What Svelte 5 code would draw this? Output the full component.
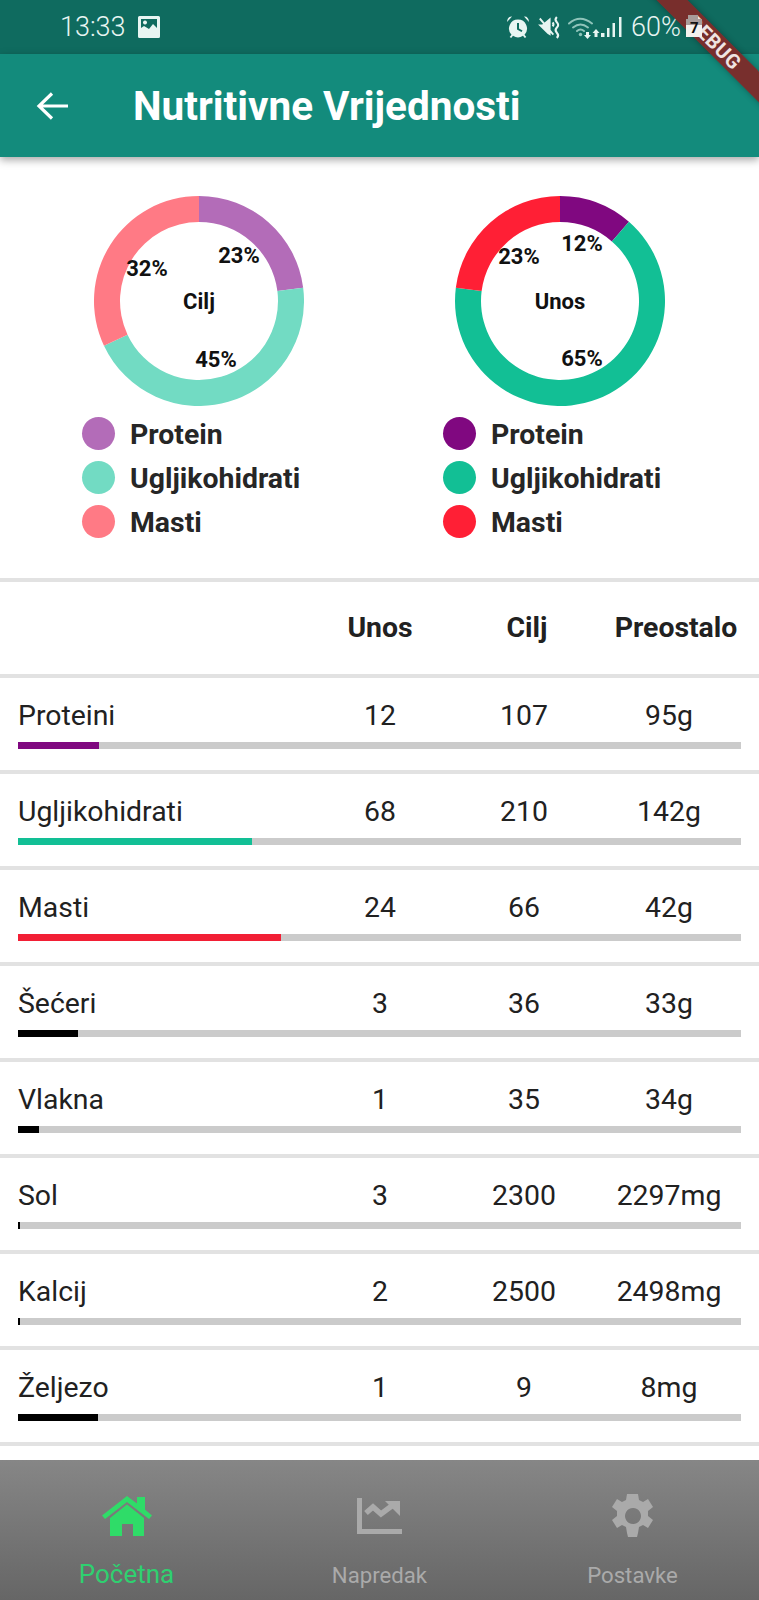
<script>
  const C = 105, R = 79;
  function arcPath(startPct, endPct) {
    const a0 = (startPct / 100) * 2 * Math.PI - Math.PI / 2;
    const a1 = (endPct / 100) * 2 * Math.PI - Math.PI / 2;
    const large = endPct - startPct > 50 ? 1 : 0;
    const p = (r, a) => `${(C + r * Math.cos(a)).toFixed(2)} ${(C + r * Math.sin(a)).toFixed(2)}`;
    return `M${p(C, a0)} A${C} ${C} 0 ${large} 1 ${p(C, a1)} L${p(R, a1)} A${R} ${R} 0 ${large} 0 ${p(R, a0)} Z`;
  }
  function slices(list) {
    let s = 0;
    return list.map((x) => {
      const item = { ...x, d: arcPath(s, s + x.share) };
      s += x.share;
      return item;
    });
  }
  const charts = [
    {
      title: 'Cilj',
      slices: slices([
        { pct: 23, share: 23, color: '#b36cb8', lx: 145, ly: 59 },
        { pct: 45, share: 45, color: '#72dbc3', lx: 122, ly: 163 },
        { pct: 32, share: 32, color: '#ff7a85', lx: 53, ly: 72 }
      ])
    },
    {
      title: 'Unos',
      slices: slices([
        { pct: 12, share: 11.4, color: '#800880', lx: 127, ly: 47 },
        { pct: 65, share: 65.6, color: '#12bf95', lx: 127, ly: 162 },
        { pct: 23, share: 23, color: '#ff1f35', lx: 64, ly: 60 }
      ])
    }
  ];
  const names = ['Protein', 'Ugljikohidrati', 'Masti'];
  const rows = [
    { name: 'Proteini', unos: 12, cilj: 107, unit: 'g', color: '#800880' },
    { name: 'Ugljikohidrati', unos: 68, cilj: 210, unit: 'g', color: '#12bf95' },
    { name: 'Masti', unos: 24, cilj: 66, unit: 'g', color: '#f21f35' },
    { name: 'Šećeri', unos: 3, cilj: 36, unit: 'g', color: '#000' },
    { name: 'Vlakna', unos: 1, cilj: 35, unit: 'g', color: '#000' },
    { name: 'Sol', unos: 3, cilj: 2300, unit: 'mg', color: '#000' },
    { name: 'Kalcij', unos: 2, cilj: 2500, unit: 'mg', color: '#000' },
    { name: 'Željezo', unos: 1, cilj: 9, unit: 'mg', color: '#000' }
  ];
</script>

<div class="screen">
  <div class="status">
    <span class="time">13:33</span>
    <svg class="img-ic" viewBox="0 0 22 22" width="22" height="22">
      <path fill="#e8f5f2" fill-rule="evenodd" d="M0 1.5A1.5 1.5 0 0 1 1.5 0h19A1.5 1.5 0 0 1 22 1.5v19a1.5 1.5 0 0 1-1.5 1.5h-19A1.5 1.5 0 0 1 0 20.5zM3 3v9l3-2 5 3 4-5 4 4V3zM7 4.500a2 2 0 1 0 .01 0z"/>
    </svg>
    <div class="grow"></div>
    <svg class="st-ic" viewBox="0 0 24 24" width="24" height="24">
      <path fill="#e8f5f2" fill-rule="evenodd" d="M12 4.500a9 9 0 0 1 6.500 15.200l1.800 2.300-1.500 1-1.800-2.200a9 9 0 0 1-10 0L5.200 23l-1.500-1 1.800-2.300A9 9 0 0 1 12 4.500zM11 8v6.500l4.500 2.500 1-1.600-3.500-2V8z"/>
      <path fill="#e8f5f2" d="M1 7 6 1.500q-4.500-.5-5 5.500zM23 7l-5-5.500q4.500-.5 5 5.500z"/>
    </svg>
    <svg class="st-ic mute" viewBox="0 0 22 24" width="25" height="25">
      <path fill="#e8f5f2" d="M1 9h4l8-6.500V20L10 18 1 9zM2 4l1.300-1.300 13 15.500-1.300 1.300z"/>
      <path fill="none" stroke="#e8f5f2" stroke-width="2" d="M19 2q-2.500 2.500 0 5t0 5 0 5 0 5M15 7q1.500 2 0 4"/>
    </svg>
    <svg class="st-ic wifi" viewBox="0 0 32 24" width="32" height="24">
      <g fill="none" stroke="#8fc4ba" stroke-width="2" stroke-linecap="round">
        <path d="M1 8.500Q12-1 24 8.500"/>
        <path d="M5 12.500q7.500-6 15 0"/>
        <path d="M9 16q3.500-3 7 0"/>
      </g>
      <circle cx="12.500" cy="19.500" r="1.700" fill="#8fc4ba"/>
      <path fill="#e8f5f2" d="M18 17h3v3h2l-3.500 4-3.500-4h2zM28 14l3.500 4h-2v4h-3v-4h-2z"/>
    </svg>
    <svg class="st-ic sig" viewBox="0 0 22 24" width="22" height="24">
      <path fill="#e8f5f2" d="M0 18h3.500v4H0zM6 13h2.500v9H6zM11.500 8H14v14h-2.500zM18 2h2.500v20H18z"/>
    </svg>
    <span class="batt-text">60%</span>
    <svg class="batt" viewBox="0 0 16 22" width="16" height="22">
      <path fill="#a89c9a" d="M2 0h10v4h4v7H0V4h2z"/>
      <rect x="0" y="10" width="16" height="12" fill="#f4f2ee"/>
    </svg>
    <span class="batt-num">7</span>
  </div>

  <header class="appbar">
    <svg class="back" viewBox="0 0 32 28" width="32" height="28">
      <path fill="none" stroke="#fff" stroke-width="3.200" d="M32 14H3M16 1.500 3 14l13 12.500"/>
    </svg>
    <h1>Nutritivne Vrijednosti</h1>
  </header>

  <section class="charts">
    {#each charts as c}
      <div class="chart">
        <svg class="donut" viewBox="0 0 210 210" width="210" height="210">
          {#each c.slices as s}
            <path d={s.d} fill={s.color} />
          {/each}
          <text class="center-label" x="105" y="105">{c.title}</text>
          {#each c.slices as s}
            <text class="pct-label" x={s.lx} y={s.ly}>{s.pct}%</text>
          {/each}
        </svg>
        <ul class="legend">
          {#each c.slices as s, i}
            <li><span class="dot" style="background:{s.color}"></span><span class="lg-text">{names[i]}</span></li>
          {/each}
        </ul>
      </div>
    {/each}
  </section>

  <section class="table">
    <div class="row head">
      <div class="cells">
        <span></span>
        <span class="c">Unos</span>
        <span class="c">Cilj</span>
        <span class="c">Preostalo</span>
      </div>
    </div>
    {#each rows as r}
      <div class="row">
        <div class="cells">
          <span>{r.name}</span>
          <span class="c">{r.unos}</span>
          <span class="c">{r.cilj}</span>
          <span class="c">{r.cilj - r.unos}{r.unit}</span>
        </div>
        <div class="track">
          <div class="fill" style="width:{(r.unos / r.cilj) * 100}%;background:{r.color}"></div>
        </div>
      </div>
    {/each}
  </section>

  <nav class="bottom">
    <div class="item active">
      <svg viewBox="0 0 50 40" width="50" height="40">
        <path fill="#2fdc68" d="M8 40V22L25 8.500 42 22v18H31V28H20v12zM0 19.500 25 0l10 7.500V1h8v12.500l7 6-3 3.500L25 6 3 23z"/>
      </svg>
      <span>Početna</span>
    </div>
    <div class="item">
      <svg viewBox="0 0 45 36" width="45" height="36">
        <path fill="#aaa" d="M0 0h5v31h40v5H0z"/>
        <path fill="none" stroke="#aaa" stroke-width="5.500" d="M9 15l7-6 8 7 12-9"/>
        <path fill="#aaa" d="M28 3h15v15z"/>
      </svg>
      <span>Napredak</span>
    </div>
    <div class="item">
      <svg viewBox="0 0 42 44" width="42" height="44">
        <path fill="#aaa" fill-rule="evenodd" d="M16 0h10l1 6 4 2 5-3 5 8-5 4v5l5 4-5 8-5-3-4 2-1 6-1 4H16l-1-4-1-6-4-2-5 3-5-8 5-4v-5L0 13l5-8 5 3 4-2 1-6zM21 14a8 8 0 1 0 .01 0z"/>
      </svg>
      <span>Postavke</span>
    </div>
  </nav>

  <div class="banner">DEBUG</div>
</div>

<style>
  :global(body) {
    margin: 0;
    background: #fff;
  }
  .screen {
    position: relative;
    width: 759px;
    height: 1600px;
    overflow: hidden;
    display: flex;
    flex-direction: column;
    font-family: Roboto, "Liberation Sans", sans-serif;
    color: #212121;
    background: #fff;
  }
  .status {
    position: relative;
    height: 54px;
    flex: none;
    background: #0f6b5f;
    display: flex;
    align-items: center;
    padding-left: 60px;
    box-sizing: border-box;
    color: #e8f5f2;
  }
  .time {
    font-size: 27px;
    font-weight: 300;
  }
  .img-ic {
    margin-left: 12px;
  }
  .grow {
    flex: 1;
  }
  .st-ic {
    flex: none;
  }
  .mute {
    margin-left: 6px;
  }
  .wifi {
    margin-left: 7px;
  }
  .sig {
    margin-left: 1px;
  }
  .batt-text {
    font-size: 27px;
    font-weight: 300;
    margin-left: 8px;
  }
  .batt {
    position: relative;
    z-index: 3;
    margin: -3px 57px 0 5px;
  }
  .batt-num {
    position: absolute;
    z-index: 3;
    left: 690px;
    top: 19px;
    font-size: 15px;
    line-height: 18px;
    font-weight: 700;
    color: #111;
  }
  .appbar {
    position: relative;
    z-index: 1;
    height: 103px;
    flex: none;
    background: #138b7c;
    display: flex;
    align-items: center;
    padding-left: 36px;
    box-shadow: 0 3px 8px rgba(0, 0, 0, 0.35);
  }
  .appbar h1 {
    margin: 0 0 0 65px;
    font-size: 40.500px;
    font-weight: 700;
    color: #fff;
  }
  .charts {
    height: 421px;
    flex: none;
    box-sizing: border-box;
    padding: 39px 17px 0 18px;
    display: grid;
    grid-template-columns: 362px 362px;
  }
  .chart {
    display: flex;
    flex-direction: column;
  }
  .chart + .chart {
    margin: 0 1px 0 -1px;
  }
  .donut {
    display: block;
    align-self: center;
  }
  .center-label,
  .pct-label {
    font-family: Roboto, "Liberation Sans", sans-serif;
    font-weight: 700;
    font-size: 22px;
    text-anchor: middle;
    dominant-baseline: central;
    fill: #111;
  }
  .legend {
    list-style: none;
    margin: 11px 0 0;
    padding: 0 0 0 64px;
    display: flex;
    flex-direction: column;
    gap: 11px;
  }
  .legend li {
    display: flex;
    align-items: center;
    gap: 15px;
    height: 33px;
    font-size: 28.400px;
    font-weight: 700;
    color: #262626;
  }
  .lg-text {
    margin-top: 2px;
  }
  .dot {
    width: 33px;
    height: 33px;
    border-radius: 50%;
    flex: none;
  }
  .table {
    flex: none;
    border-top: 4px solid #e2e2e2;
  }
  .row {
    height: 96px;
    box-sizing: border-box;
    padding: 23px 18px 0;
    border-bottom: 4px solid #e2e2e2;
  }
  .cells {
    display: grid;
    grid-template-columns: 290px 144px 144px 146px;
    font-size: 28.400px;
    line-height: 30px;
    height: 30px;
    margin-right: -15px;
  }
  .c {
    text-align: center;
    white-space: nowrap;
  }
  .head {
    font-weight: 700;
    padding-top: 31px;
  }
  .head .cells {
    grid-template-columns: 290px 144px 150px 148px;
  }
  .track {
    height: 7px;
    margin-top: 11px;
    background: #cbcbcb;
  }
  .fill {
    height: 100%;
    min-width: 1.500px;
  }
  .bottom {
    position: absolute;
    left: 0;
    right: 0;
    bottom: 0;
    height: 140px;
    display: grid;
    grid-template-columns: 253px 253px 253px;
    background: linear-gradient(#868686, #666);
  }
  .item {
    display: flex;
    flex-direction: column;
    align-items: center;
    color: #aaa;
    font-size: 22.200px;
  }
  .item svg {
    display: block;
    height: 44px;
    margin-top: 34px;
  }
  .item span {
    line-height: 24px;
    margin-top: 25px;
  }
  .item.active {
    color: #2fd070;
    font-size: 26px;
  }
  .item.active span {
    margin-top: 24px;
  }
  .banner {
    position: absolute;
    z-index: 2;
    left: 617px;
    top: 34px;
    width: 200px;
    height: 22px;
    box-sizing: border-box;
    padding-right: 7px;
    line-height: 22px;
    transform: rotate(45deg);
    background: rgba(124, 44, 42, 0.97);
    color: #efe4e2;
    font-size: 20px;
    font-weight: 700;
    text-align: center;
    letter-spacing: 0.5px;
    box-shadow: 0 0 6px rgba(0, 0, 0, 0.3);
  }
</style>
